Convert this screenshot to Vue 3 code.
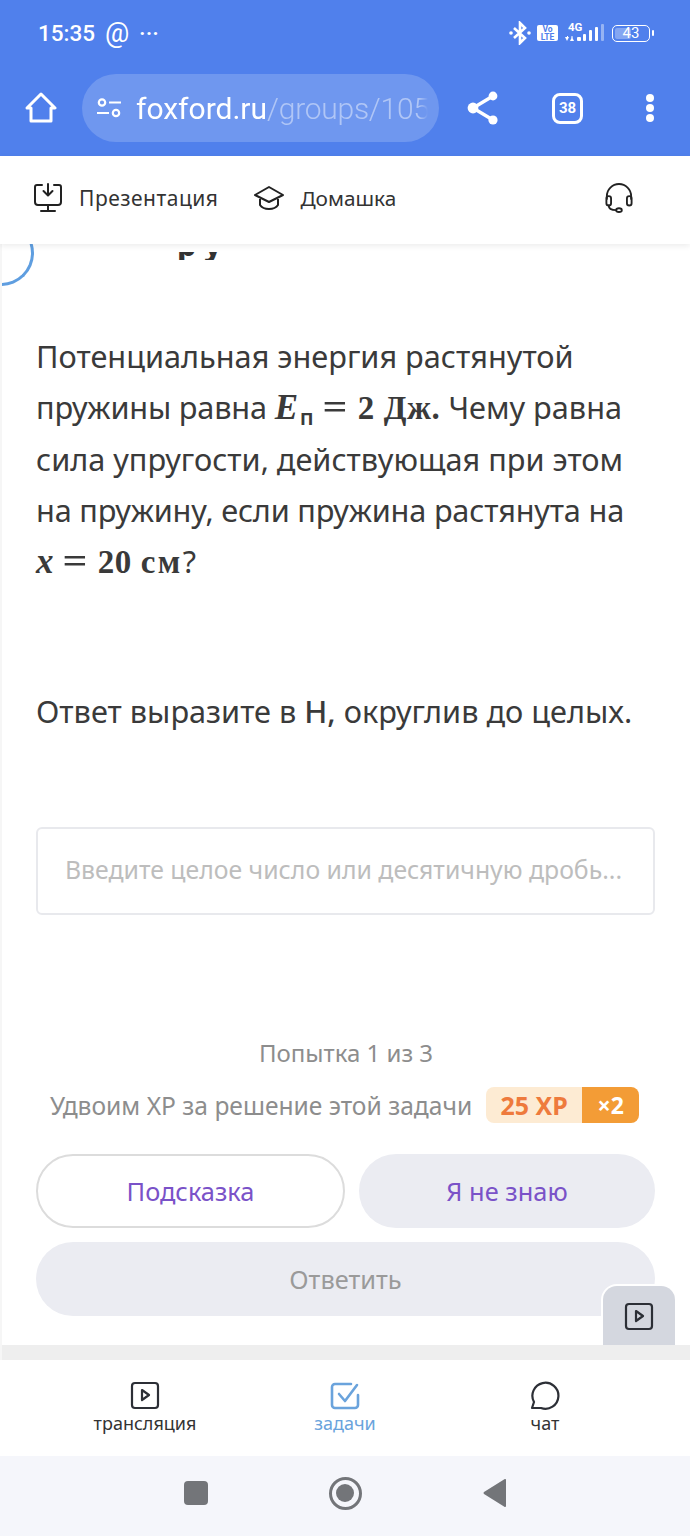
<script setup>
const tabs = [
  { id: 'stream', label: 'трансляция' },
  { id: 'tasks', label: 'задачи', active: true },
  { id: 'chat', label: 'чат' },
]
</script>

<template>
  <div class="phone">
    <header class="browser">
      <div class="status">
        <div class="status-left">
          <span class="time">15:35</span>
          <span class="at">@</span>
          <span class="dots">···</span>
        </div>
        <div class="status-right">
          <svg class="bt" width="22" height="24" viewBox="0 0 22 24" fill="none" stroke="#fff" stroke-width="2.600">
            <path d="M5 7l11 10-5 5V2l5 5L5 17" />
            <circle cx="2" cy="12" r="1.800" fill="#fff" stroke="none" />
            <circle cx="20" cy="12" r="1.800" fill="#fff" stroke="none" />
          </svg>
          <span class="volte">Vo<br />LTE</span>
          <div class="net">
            <span class="g4">4G</span>
            <svg width="40" height="18" viewBox="0 0 40 18" fill="#fff">
              <path d="M0 14h4l-2 4zM5 18h4l-2-4z" />
              <rect x="2" y="13" width="1" height="2" /><rect x="6.500" y="13" width="1" height="2" />
              <rect x="12" y="14" width="4" height="4" rx="1" />
              <rect x="18" y="11" width="3" height="7" rx="1" /><rect x="24" y="7" width="3" height="11" rx="1" />
              <rect x="30" y="4" width="3" height="14" rx="1" />
              <rect x="36" y="1" width="3" height="17" rx="1" opacity=".4" />
            </svg>
          </div>
          <div class="battery"><span class="level"></span><span class="pct">43</span></div>
          <span class="nub"></span>
        </div>
      </div>
      <div class="toolbar">
        <svg class="home" width="32" height="32" viewBox="0 0 32 32" fill="none" stroke="#fff" stroke-width="3" stroke-linejoin="round">
          <path d="M2 16L16 2l14 14h-4v13H6V16z" />
        </svg>
        <div class="url">
          <svg width="26" height="22" viewBox="0 0 26 22" fill="none" stroke="#fff" stroke-width="2.200">
            <circle cx="6" cy="5.500" r="3.200" /><path d="M13 5.500h12M1 16h12" /><circle cx="20" cy="16" r="3.200" />
          </svg>
          <div class="url-text"><span class="host">foxford.ru</span><span class="path">/groups/105</span></div>
        </div>
        <svg class="share" width="34" height="36" viewBox="0 0 34 36" fill="#fff" stroke="#fff" stroke-width="3.400">
          <path d="M27 6L7 18l20 12" fill="none" />
          <circle cx="27" cy="6" r="4.400" stroke="none" /><circle cx="7" cy="18" r="5.400" stroke="none" /><circle cx="27" cy="30" r="4.600" stroke="none" />
        </svg>
        <div class="tabs-count">38</div>
        <div class="menu"><i></i><i></i><i></i></div>
      </div>
    </header>

    <nav class="topnav">
      <div class="nav-item">
        <svg width="30" height="30" viewBox="0 0 30 30" fill="none" stroke="#222" stroke-width="2" stroke-linecap="round" stroke-linejoin="round">
          <path d="M9 2H4a2 2 0 0 0-2 2v15a3 3 0 0 0 3 3h20a3 3 0 0 0 3-3V4a2 2 0 0 0-2-2h-5" />
          <path d="M15 1v11M10.500 8l4.500 4.500L19.500 8M15 22v6M8 28h14" />
        </svg>
        <span>Презентация</span>
      </div>
      <div class="nav-item second">
        <svg width="32" height="28" viewBox="0 0 32 28" fill="none" stroke="#222" stroke-width="2" stroke-linejoin="round">
          <path d="M16 3L2 11l14 7 14-7z" /><path d="M7 15v6c2 3 5 4 9 4s7-1 9-4v-6" />
        </svg>
        <span>Домашка</span>
      </div>
      <svg class="headset" width="28" height="30" viewBox="0 0 30 32" fill="none" stroke="#222" stroke-width="2" stroke-linecap="round">
        <path d="M2 17v-3a13 13 0 0 1 26 0v3" />
        <rect x="1.500" y="14" width="5" height="10" rx="2.500" /><rect x="23.500" y="14" width="5" height="10" rx="2.500" />
        <path d="M4 24c0 4 3 5 8 5" /><ellipse cx="15" cy="29" rx="3" ry="2" />
      </svg>
    </nav>

    <main class="content">
      <div class="spinner"></div>
      <div class="clipped-title"><div class="clip-inner"><span>р</span><span>у</span></div></div>
      <section class="task">
        <p class="para">
          Потенциальная энергия растянутой<br />
          <span class="tight">пружины равна</span> <span class="m"><em>E</em><sub>п</sub><b class="eq">=</b>2 Дж.</span> Чему равна<br />
          сила упругости, действующая при этом<br />
          <span class="tight">на пружину, если пружина растянута на</span><br />
          <span class="m"><em>x</em><b class="eq">=</b>20 <span class="wide">см</span></span>?
        </p>
        <p class="para answer">Ответ выразите в <span class="unit">Н,</span> округлив до целых.</p>
        <div class="input">Введите целое число или десятичную дробь...</div>
      </section>
      <section class="actions">
        <div class="attempt">Попытка 1 из 3</div>
        <div class="xp-row">
          <span>Удвоим XP за решение этой задачи</span>
          <div class="xp"><span class="xp-val">25 XP</span><span class="xp-mul">×2</span></div>
        </div>
        <div class="btn-row">
          <div class="btn outline">Подсказка</div>
          <div class="btn filled">Я не знаю</div>
        </div>
        <div class="btn submit">Ответить</div>
      </section>
      <div class="float-play">
        <svg width="30" height="30" viewBox="0 0 30 30" fill="none" stroke="#2c2f36" stroke-width="2.200" stroke-linejoin="round">
          <rect x="2" y="3" width="26" height="25" rx="3" /><path d="M12 10l7 5-7 5z" />
        </svg>
      </div>
      <div class="shade"></div>
    </main>

    <nav class="bottom-tabs">
      <div v-for="t in tabs" :key="t.id" class="tab" :class="{ active: t.active }">
        <svg v-if="t.id === 'stream'" width="30" height="30" viewBox="0 0 30 30" fill="none" stroke="#2c2f36" stroke-width="2.200" stroke-linejoin="round">
          <rect x="2" y="3" width="26" height="25" rx="3" /><path d="M12 10l7 5-7 5z" />
        </svg>
        <svg v-else-if="t.id === 'tasks'" width="30" height="30" viewBox="0 0 30 30" fill="none" stroke="#6aa3dc" stroke-width="2.600" stroke-linecap="round" stroke-linejoin="round">
          <path d="M21 4H5a3 3 0 0 0-3 3v18a3 3 0 0 0 3 3h20a3 3 0 0 0 3-3V15" /><path d="M9 14l6 7L27 5" />
        </svg>
        <svg v-else width="30" height="30" viewBox="0 0 30 30" fill="none" stroke="#2c2f36" stroke-width="2.200" stroke-linejoin="round">
          <path d="M2 28l2-6a13 13 0 1 1 7 6z" />
        </svg>
        <span>{{ t.label }}</span>
      </div>
    </nav>

    <footer class="sysnav">
      <span class="square"></span>
      <span class="ring"><i></i></span>
      <svg width="24" height="28" viewBox="0 0 24 28" fill="#737579"><path d="M23 1v26a1 1 0 0 1-1.600.8L1 15a1.500 1.500 0 0 1 0-2L21.400.2A1 1 0 0 1 23 1z" /></svg>
    </footer>
  </div>
</template>

<style>
html, body { margin: 0; background: #fff; }
</style>

<style scoped>
.phone {
  width: 690px;
  height: 1536px;
  display: flex;
  flex-direction: column;
  overflow: hidden;
  font-family: "Noto Sans", "Open Sans", sans-serif;
  color: #333;
  background: #fff;
}
.browser { background: #5080ec; height: 156px; color: #fff; flex: none; }
.status {
  height: 66px;
  display: flex;
  justify-content: space-between;
  align-items: center;
  padding: 0 36px 0 38px;
}
.status-left { display: flex; align-items: center; gap: 10px; }
.time { font: 500 22.500px "Roboto", sans-serif; }
.at { font: 400 27px "Roboto", sans-serif; }
.dots { font: 700 20px "Roboto", sans-serif; letter-spacing: 0.500px; }
.status-right { display: flex; align-items: center; }
.bt { margin-right: 6px; }
.volte {
  width: 21px; height: 16px; background: #fff; color: #5080ec; border-radius: 2px;
  font: 700 8.500px/8px "Roboto", sans-serif; text-align: center; margin-right: 7px;
}
.net { position: relative; width: 38px; height: 24px; margin-right: 9px; }
.net svg { position: absolute; left: 0; bottom: 4px; }
.g4 { position: absolute; left: 3px; top: -1px; font: 700 11.500px "Roboto", sans-serif; }
.battery {
  position: relative; width: 36px; height: 15px; border: 1.500px solid #fff; border-radius: 5px;
  display: flex; align-items: center; justify-content: center;
}
.level { position: absolute; left: 2px; top: 2px; bottom: 2px; width: 16px; background: rgba(255,255,255,.3); border-radius: 2px; }
.pct { position: relative; font: 400 15px "Roboto", sans-serif; }
.nub { width: 2px; height: 6px; background: #fff; margin-left: 2px; border-radius: 1px; }
.toolbar { height: 84px; display: flex; align-items: center; padding-left: 25px; }
.url {
  margin-left: 25px; width: 357px; height: 68px; border-radius: 34px; background: rgba(255,255,255,.18);
  display: flex; align-items: center; padding-left: 14px; box-sizing: border-box; overflow: hidden;
}
.url-text {
  margin-left: 14px; font: 300 30px "Roboto", sans-serif; white-space: nowrap; width: 292px; overflow: hidden;
  mask-image: linear-gradient(to right, #000 97%, transparent);
}
.host { font-weight: 400; }
.path { color: rgba(255,255,255,.45); letter-spacing: -.25px; }
.share { margin-left: 27px; }
.tabs-count {
  margin-left: 52px; width: 25px; height: 25px; border: 3px solid #fff; border-radius: 8px;
  display: flex; align-items: center; justify-content: center; font: 700 15px "Roboto", sans-serif;
}
.menu { margin-left: 63px; display: flex; flex-direction: column; gap: 2px; }
.menu i { width: 8px; height: 8px; border-radius: 50%; background: #fff; }
.topnav {
  height: 88px; flex: none; display: flex; align-items: center; padding: 0 33px 4px; box-sizing: border-box; background: #fff; color: #333;
  box-shadow: 0 2px 6px rgba(0,0,0,.08); position: relative; z-index: 2;
}
.nav-item { display: flex; align-items: center; gap: 16px; font-size: 21px; letter-spacing: .5px; }
.nav-item.second { margin-left: 35px; gap: 15px; letter-spacing: 0; font-size: 20.800px; }
.headset { margin-left: auto; margin-right: 24px; }
.content { flex: 1; position: relative; overflow: hidden; border-left: 2px solid #f6f6f6; }
.spinner {
  position: absolute; left: -34px; top: -24px; width: 60px; height: 60px; border: 3px solid transparent;
  border-right-color: #5f9ee0; border-bottom-color: #5f9ee0; border-radius: 50%;
}
.clipped-title { height: 16px; padding-top: 8px; box-sizing: border-box; }
.clip-inner {
  height: 8px; overflow: hidden; font: 800 30px/1 "Noto Sans", sans-serif; color: #333;
  display: flex; gap: 8px; padding-left: 175px;
}
.clip-inner span { display: block; margin-top: -22px; }
.task { padding: 71px 34px 0; }
.para { margin: 0; font-size: 30.700px; line-height: 51px; color: #3a3a3a; white-space: nowrap; }
.tight { letter-spacing: -.2px; }
.m { font-family: "Liberation Serif", serif; font-weight: 700; font-size: 33px; letter-spacing: .6px; }
.m em { font-style: italic; font-size: 35px; }
.m sub { font: 600 22px "Noto Sans", sans-serif; vertical-align: -6px; margin-left: 1px; }
.eq { display: inline-block; margin: 0 12px 0 11px; font-size: 35px; font-weight: 700; line-height: 1; transform: scaleX(1.250); }
.wide { letter-spacing: 2.500px; }
.answer { margin-top: 98px; }
.unit { font-weight: 500; }
.input {
  margin-top: 90px; height: 88px; width: 619px; box-sizing: border-box; border: 2px solid #e8e9ed; border-radius: 6px;
  display: flex; align-items: center; padding: 0 0 4px 27px; font-size: 24.800px; color: #bdbdbd; white-space: nowrap; overflow: hidden;
}
.actions { padding: 120px 34px 0; display: flex; flex-direction: column; }
.attempt { text-align: center; color: #8d8d8d; font-size: 24px; line-height: 36px; }
.xp-row { margin-top: 16px; display: flex; align-items: center; padding-left: 14px; color: #8d8d8d; font-size: 24.600px; white-space: nowrap; gap: 14px; }
.xp { display: flex; height: 36px; border-radius: 8px; overflow: hidden; font-weight: 700; align-items: stretch; }
.xp-val { width: 96px; background: #fdebd3; color: #ee7a3c; font-size: 25px; display: flex; align-items: center; justify-content: center; }
.xp-mul { width: 57px; background: #f39c36; color: #fff; font-size: 23px; display: flex; align-items: center; justify-content: center; }
.btn-row { margin-top: 31px; display: flex; gap: 14px; }
.btn {
  height: 74px; border-radius: 37px; display: flex; align-items: center; justify-content: center; font-size: 25.400px; box-sizing: border-box;
}
.outline { width: 309px; border: 2px solid #dcdcdc; color: #7a52c8; }
.filled { width: 296px; background: #ebecf2; color: #7a52c8; }
.submit { margin-top: 14px; width: 619px; background: #ebecf2; color: #9a9a9a; }
.float-play {
  position: absolute; right: 15px; top: 1042px; width: 72px; height: 62px; background: #d4d7df;
  border-radius: 14px 14px 0 0; display: flex; align-items: flex-start; justify-content: center; padding-top: 15px; box-sizing: border-box;
  box-shadow: 0 0 0 2px #fff; z-index: 1;
}
.shade { position: absolute; left: -2px; right: 0; bottom: 0; height: 15px; background: #eeeeee; z-index: 2; }
.bottom-tabs { height: 96px; flex: none; display: flex; background: #fff; justify-content: center; padding: 0 45px; box-sizing: border-box; }
.tab { width: 200px; display: flex; flex-direction: column; align-items: center; padding-top: 20px; font-size: 18px; color: #333; line-height: 26px; }
.tab.active { color: #6aa3dc; }
.sysnav { height: 80px; flex: none; background: #f5f6fb; display: flex; align-items: center; justify-content: center; gap: 121px; padding-bottom: 6px; box-sizing: border-box; }
.square { width: 24px; height: 24px; border-radius: 4px; background: #737579; }
.ring { border: 3.500px solid #737579; border-radius: 50%; display: flex; align-items: center; justify-content: center; width: 27px; height: 27px; }
.ring i { width: 18px; height: 18px; border-radius: 50%; background: #737579; }
</style>
